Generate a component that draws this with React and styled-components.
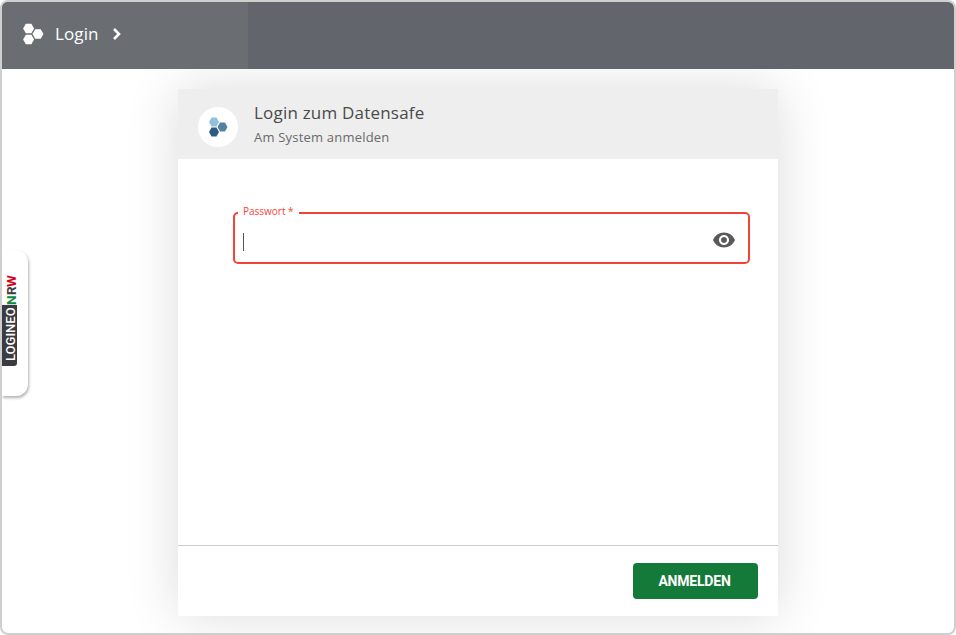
import styled, { createGlobalStyle } from "styled-components";

const GlobalStyle = createGlobalStyle`
  html, body {
    margin: 0;
    padding: 0;
    background: #fff;
    font-family: "Open Sans", "Liberation Sans", sans-serif;
  }
  * { box-sizing: border-box; }
`;

const Frame = styled.div`
  position: relative;
  width: 956px;
  height: 635px;
  border: 2px solid #cfcfcf;
  border-radius: 8px;
  overflow: hidden;
  display: flex;
  flex-direction: column;
  background: #fff;
`;

const Toolbar = styled.header`
  position: relative;
  z-index: 1;
  height: 67px;
  flex: none;
  display: flex;
  background: #62656b;
`;

const Crumb = styled.div`
  width: 246px;
  padding: 0 0 3px 20px;
  display: flex;
  align-items: center;
  background: #6a6d72;
  color: #fff;
`;

const CrumbLabel = styled.span`
  margin: 0 0 2px 11px;
  font-size: 17px;
  font-weight: 500;
  letter-spacing: 0.1px;
`;

const Chevron = styled.svg`
  margin-left: 12px;
`;

const Main = styled.main`
  flex: 1;
  display: flex;
  justify-content: center;
  padding: 20px 0 17px;
`;

const Dialog = styled.section`
  width: 600px;
  display: flex;
  flex-direction: column;
  background: #fff;
  box-shadow: 0 0 50px rgba(0, 0, 0, 0.14);
`;

const DialogHead = styled.div`
  height: 70px;
  flex: none;
  display: flex;
  align-items: center;
  padding-left: 20px;
  background: #eeeeee;
`;

const LogoBadge = styled.div`
  width: 40px;
  height: 40px;
  margin-top: 6px;
  border-radius: 50%;
  background: #fff;
  display: flex;
  align-items: center;
  justify-content: center;
`;

const HeadText = styled.div`
  margin-left: 16px;
  display: flex;
  flex-direction: column;
`;

const Title = styled.h1`
  margin: 0;
  font-size: 17px;
  line-height: 24px;
  font-weight: 400;
  letter-spacing: 0.2px;
  color: #4a4a4a;
`;

const Subtitle = styled.p`
  margin: 2px 0 1px;
  font-size: 13px;
  line-height: 20px;
  letter-spacing: 0.2px;
  color: #6a6a6a;
`;

const DialogBody = styled.div`
  flex: 1;
  padding: 46px 28px 0 55px;
`;

const Field = styled.fieldset`
  position: relative;
  margin: 0;
  height: 59px;
  padding: 0 8px;
  border: 2px solid #f44336;
  border-radius: 5px;
`;

const FieldLegend = styled.legend`
  margin-left: -5px;
  padding: 0 5px 3px;
  font-size: 10px;
  line-height: 12px;
  color: #f44336;
`;

const Caret = styled.span`
  display: block;
  width: 1px;
  height: 18px;
  margin-top: 13px;
  background: #555;
`;

const EyeButton = styled.span`
  position: absolute;
  right: 12px;
  top: 8px;
  display: flex;
  color: #5a5a5a;
`;

const DialogFoot = styled.footer`
  height: 71px;
  flex: none;
  display: flex;
  align-items: center;
  justify-content: flex-end;
  padding: 0 20px 0 0;
  border-top: 1px solid #cccccc;
`;

const Submit = styled.button`
  width: 125px;
  height: 36px;
  padding: 0 2px 0 0;
  border: 0;
  border-radius: 4px;
  background: #147a39;
  color: #fff;
  font-family: Roboto, "Liberation Sans", sans-serif;
  font-size: 14px;
  font-weight: 700;
  letter-spacing: -0.2px;
`;

const SideTab = styled.aside`
  position: absolute;
  left: 0;
  top: 248px;
  width: 26px;
  height: 146px;
  background: #fff;
  border-radius: 0 12px 12px 0;
  box-shadow: 1px 2px 3px rgba(0, 0, 0, 0.3);
`;

const TabBrand = styled.div`
  position: absolute;
  left: 0;
  top: 25px;
  height: 91px;
  writing-mode: vertical-rl;
  transform: rotate(180deg);
  display: flex;
  align-items: flex-start;
  font-family: Roboto, "Liberation Sans", sans-serif;
  font-weight: 700;
  line-height: 18px;
`;

const TabDark = styled.span`
  width: 15px;
  padding: 5px 0 0;
  height: 61px;
  background: #3c3c40;
  color: #fff;
  font-size: 13px;
  font-weight: 500;
  border-radius: 3px 0 0 0;
`;

const TabLetter = styled.span`
  color: ${(props) => props.color};
  font-size: 13.5px;
`;

const Hexagons = ({ size, top, right, bottom }) => (
  <svg width={size} height={size} viewBox="0 0 20 20">
    <polygon fill={top} points="11,5 8.5,9.4 3.5,9.4 1,5 3.5,0.6 8.5,0.6" />
    <polygon fill={right} points="19.5,10 17,14.4 12,14.4 9.5,10 12,5.6 17,5.6" />
    <polygon fill={bottom} points="11,15 8.5,19.4 3.5,19.4 1,15 3.5,10.6 8.5,10.6" />
  </svg>
);

const App = () => {
  return (
    <>
      <GlobalStyle />
      <Frame>
        <Toolbar>
          <Crumb>
            <Hexagons size={22} top="#fff" right="#fff" bottom="#fff" />
            <CrumbLabel>Login</CrumbLabel>
            <Chevron width="12" height="14" viewBox="0 0 12 14" fill="none" stroke="#fff" strokeWidth="2.6">
              <path d="M3 2l5 5-5 5" />
            </Chevron>
          </Crumb>
        </Toolbar>
        <Main>
          <Dialog>
            <DialogHead>
              <LogoBadge>
                <Hexagons size={20} top="#93c1d9" right="#54819f" bottom="#2e5a80" />
              </LogoBadge>
              <HeadText>
                <Title>Login zum Datensafe</Title>
                <Subtitle>Am System anmelden</Subtitle>
              </HeadText>
            </DialogHead>
            <DialogBody>
              <Field>
                <FieldLegend>Passwort *</FieldLegend>
                <Caret />
                <EyeButton>
                  <svg width="24" height="24" viewBox="0 0 24 24" fill="currentColor">
                    <path d="M12 4.5C7 4.5 2.73 7.61 1 12c1.73 4.39 6 7.5 11 7.5s9.27-3.11 11-7.5c-1.73-4.39-6-7.5-11-7.5zM12 17c-2.76 0-5-2.24-5-5s2.24-5 5-5 5 2.24 5 5-2.24 5-5 5zm0-8c-1.66 0-3 1.34-3 3s1.34 3 3 3 3-1.34 3-3-1.34-3-3-3z" />
                  </svg>
                </EyeButton>
              </Field>
            </DialogBody>
            <DialogFoot>
              <Submit>ANMELDEN</Submit>
            </DialogFoot>
          </Dialog>
        </Main>
        <SideTab>
          <TabBrand>
            <TabDark>LOGINEO</TabDark>
            <TabLetter color="#0f8a3c">N</TabLetter>
            <TabLetter color="#3c3c40">R</TabLetter>
            <TabLetter color="#d6001c">W</TabLetter>
          </TabBrand>
        </SideTab>
      </Frame>
    </>
  );
};

export default App;
